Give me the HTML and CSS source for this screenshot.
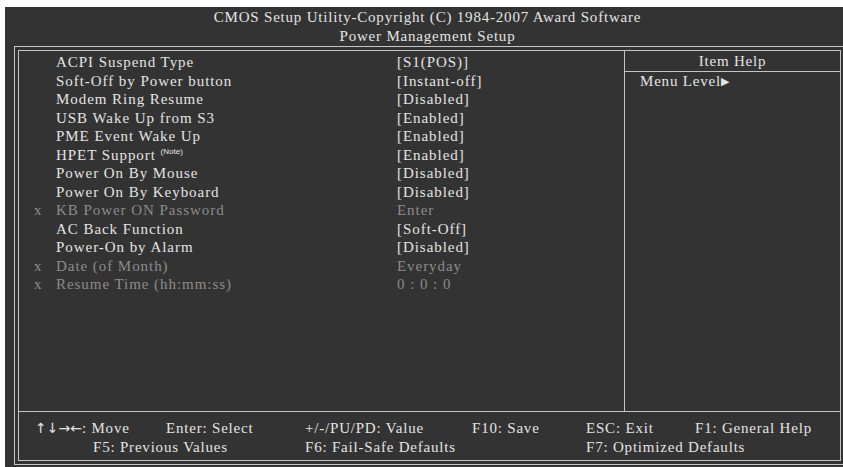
FILE: index.html
```html
<!doctype html>
<html>
    <head>
        <meta charset="utf-8">
        <title>CMOS Setup Utility - Power Management Setup</title>
        <link rel="stylesheet" href="styles.css">
    </head>

    <body>
        <div id="screen">
            <div id="title-bar">
                <div>CMOS Setup Utility-Copyright (C) 1984-2007 Award Software</div>
                <div>Power Management Setup</div>
            </div>

            <div id="frame">
                <div id="frame-inner">
                    <div id="main">
                        <div id="items">
                            <div class="item"><span class="mark"></span><span class="label">ACPI Suspend Type</span><span class="value">[S1(POS)]</span></div>
                            <div class="item"><span class="mark"></span><span class="label">Soft-Off by Power button</span><span class="value">[Instant-off]</span></div>
                            <div class="item"><span class="mark"></span><span class="label">Modem Ring Resume</span><span class="value">[Disabled]</span></div>
                            <div class="item"><span class="mark"></span><span class="label">USB Wake Up from S3</span><span class="value">[Enabled]</span></div>
                            <div class="item"><span class="mark"></span><span class="label">PME Event Wake Up</span><span class="value">[Enabled]</span></div>
                            <div class="item"><span class="mark"></span><span class="label">HPET Support <sup class="note">(Note)</sup></span><span class="value">[Enabled]</span></div>
                            <div class="item"><span class="mark"></span><span class="label">Power On By Mouse</span><span class="value">[Disabled]</span></div>
                            <div class="item"><span class="mark"></span><span class="label">Power On By Keyboard</span><span class="value">[Disabled]</span></div>
                            <div class="item locked"><span class="mark">x</span><span class="label">KB Power ON Password</span><span class="value">Enter</span></div>
                            <div class="item"><span class="mark"></span><span class="label">AC Back Function</span><span class="value">[Soft-Off]</span></div>
                            <div class="item"><span class="mark"></span><span class="label">Power-On by Alarm</span><span class="value">[Disabled]</span></div>
                            <div class="item locked"><span class="mark">x</span><span class="label">Date (of Month)</span><span class="value">Everyday</span></div>
                            <div class="item locked"><span class="mark">x</span><span class="label">Resume Time (hh:mm:ss)</span><span class="value">0 : 0 : 0</span></div>
                        </div>

                        <div id="help">
                            <div id="help-title">Item Help</div>
                            <div id="help-text">Menu Level<span class="arrow">&#9654;</span></div>
                        </div>
                    </div>

                    <div id="keys">
                        <span><span class="arrows">&uarr;&darr;&rarr;&larr;</span>: Move</span>
                        <span>Enter: Select</span>
                        <span>+/-/PU/PD: Value</span>
                        <span>F10: Save</span>
                        <span>ESC: Exit</span>
                        <span>F1: General Help</span>
                        <span class="key-f5">F5: Previous Values</span>
                        <span class="key-f6">F6: Fail-Safe Defaults</span>
                        <span class="key-f7">F7: Optimized Defaults</span>
                    </div>
                </div>
            </div>
        </div>
    </body>
</html>
```

FILE: styles.css
```css
body {
    margin: 0;
    background: white;
    font-family: 'Liberation Serif', 'Times New Roman', serif;
    font-size: 15px;
    letter-spacing: 0.8px;
    color: #e4e4e4;
}

#screen {
    margin: 7px 0 0 5px;
    height: 460px;
    background: #333333;
    overflow: hidden;
}

#title-bar {
    height: 39px;
    padding-left: 7px;
    padding-top: 1px;
    box-sizing: border-box;
    text-align: center;
    line-height: 19px;
}

#frame {
    width: 831px;
    margin-left: 9px;
    padding: 3px;
    border: 1px solid #c4c4c4;
    box-sizing: border-box;
}

#frame-inner {
    border: 1px solid #c4c4c4;
}

#main {
    display: flex;
    height: 360px;
    border-bottom: 1px solid #c4c4c4;
}

#items {
    width: 605px;
    padding-top: 2px;
    line-height: 18.5px;
    letter-spacing: 0.95px;
}

.item {
    display: grid;
    grid-template-columns: 15px 22px 341px auto;
}

.item .mark {
    grid-column: 2;
}

.item.locked {
    color: #8c8c8c;
}

.note {
    font-family: 'Liberation Sans', Arial, sans-serif;
    font-size: 8px;
    letter-spacing: 0;
    vertical-align: 6px;
    line-height: 0;
}

#help {
    flex: 1;
    border-left: 1px solid #c4c4c4;
}

#help-title {
    text-align: center;
    line-height: 18.5px;
    padding-top: 1px;
    border-bottom: 1px solid #c4c4c4;
}

#help-text {
    padding-left: 15px;
    line-height: 18.5px;
}

.arrow {
    font-family: 'DejaVu Sans', sans-serif;
    font-size: 11px;
    letter-spacing: 0;
    vertical-align: 1px;
}

#keys {
    display: grid;
    grid-template-columns: 131px 139px 167px 114px 109px auto;
    padding: 7px 0 3px 16px;
    line-height: 19px;
    white-space: nowrap;
}

.arrows {
    font-family: 'DejaVu Sans', sans-serif;
    font-size: 14px;
    letter-spacing: 0;
}

.key-f5 {
    grid-column: 1 / 3;
    padding-left: 58px;
}

.key-f6 {
    grid-column: 3 / 5;
}

.key-f7 {
    grid-column: 5 / 7;
}
```
